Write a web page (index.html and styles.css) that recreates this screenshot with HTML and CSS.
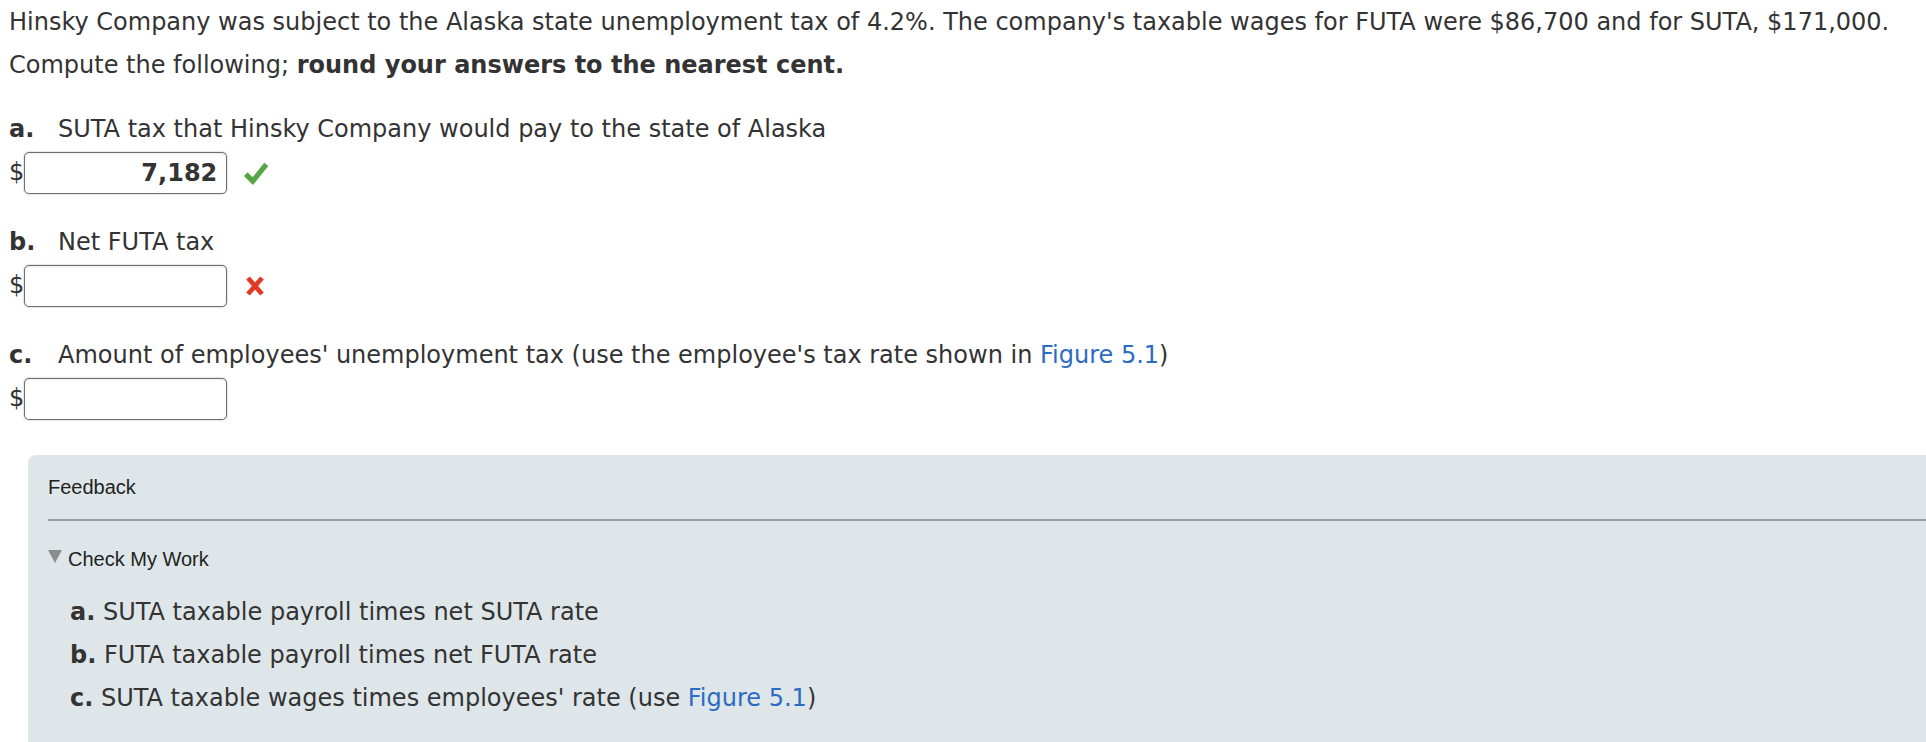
FILE: index.html
```html
<!DOCTYPE html>
<html>
<head>
<meta charset="utf-8">
<link rel="stylesheet" href="styles.css">
</head>
<body>
<div class="problem">
  <p class="intro">Hinsky Company was subject to the Alaska state unemployment tax of 4.2%. The company's taxable wages for FUTA were $86,700 and for SUTA, $171,000.<br>Compute the following; <b>round your answers to the nearest cent.</b></p>
  <div class="parts">
    <div class="part">
      <div class="question"><span class="label">a.</span><span>SUTA tax that Hinsky Company would pay to the state of Alaska</span></div>
      <div class="answer">
        <span class="currency">$</span><span class="field">7,182</span>
        <svg class="mark" width="26" height="26" viewBox="0 0 24 24"><path d="M2.5 13 L9 19.5 L21.5 4" fill="none" stroke="#55a642" stroke-width="4.8" stroke-linecap="butt" stroke-linejoin="miter"/></svg>
      </div>
    </div>
    <div class="part">
      <div class="question"><span class="label">b.</span><span>Net FUTA tax</span></div>
      <div class="answer">
        <span class="currency">$</span><span class="field"></span>
        <svg class="mark" width="24" height="24" viewBox="0 0 24 24"><path d="M5 4 L19 20 M19 4 L5 20" fill="none" stroke="#e33a26" stroke-width="4.8"/></svg>
      </div>
    </div>
    <div class="part">
      <div class="question"><span class="label">c.</span><span>Amount of employees' unemployment tax (use the employee's tax rate shown in <a class="link">Figure 5.1</a>)</span></div>
      <div class="answer">
        <span class="currency">$</span><span class="field"></span>
      </div>
    </div>
  </div>
</div>
<div class="feedback">
  <div class="fb-title">Feedback</div>
  <div class="fb-rule"></div>
  <div class="fb-toggle"><span class="tri"></span>Check My Work</div>
  <div class="fb-items">
    <div><b>a.</b> SUTA taxable payroll times net SUTA rate</div>
    <div><b>b.</b> FUTA taxable payroll times net FUTA rate</div>
    <div><b>c.</b> SUTA taxable wages times employees' rate (use <a class="link">Figure 5.1</a>)</div>
  </div>
</div>
</body>
</html>
```
FILE: styles.css
```css
html, body {
  margin: 0;
  padding: 0;
  background: #ffffff;
}
body {
  font-family: Verdana, "DejaVu Sans", sans-serif;
  font-size: 24px;
  color: #333333;
  overflow: hidden;
}
.problem {
  padding-left: 9px;
}
.intro {
  margin: 0;
  line-height: 43px;
  padding-top: 1px;
}
.parts {
  display: flex;
  flex-direction: column;
  gap: 27px;
  margin-top: 21px;
}
.question {
  display: flex;
  line-height: 43px;
}
.label {
  font-weight: bold;
  width: 49px;
  flex: none;
}
.answer {
  display: flex;
  align-items: center;
  height: 43px;
}
.currency {
  line-height: 43px;
}
.field {
  box-sizing: border-box;
  width: 203px;
  height: 42px;
  border: 1px solid #6f6f6f;
  border-radius: 5px;
  box-shadow: 0 0 2px rgba(0,0,0,0.35), inset 0 1px 2px rgba(0,0,0,0.08);
  text-align: right;
  font-weight: bold;
  padding-right: 9px;
  line-height: 40px;
  background: #fff;
}
.mark {
  margin-left: 16px;
}
.link {
  color: #2b6bc4;
}
.feedback {
  margin-top: 35px;
  margin-left: 28px;
  background: #dfe6e9;
  border-top-left-radius: 8px;
  padding: 13px 0 40px 20px;
  font-family: Arial, "Liberation Sans", sans-serif;
  color: #222222;
}
.fb-title {
  font-size: 20px;
  line-height: 38px;
}
.fb-rule {
  height: 2px;
  background: #9a9fa3;
  margin-top: 13px;
}
.fb-toggle {
  display: flex;
  align-items: center;
  font-size: 20px;
  line-height: 38px;
  margin-top: 19px;
}
.tri {
  width: 0;
  height: 0;
  border-left: 7px solid transparent;
  border-right: 7px solid transparent;
  border-top: 13px solid #8c8c8c;
  margin-right: 6px;
  margin-top: -6px;
}
.fb-items {
  font-family: Verdana, "DejaVu Sans", sans-serif;
  font-size: 24px;
  color: #333333;
  line-height: 43px;
  padding-left: 22px;
  margin-top: 13px;
}
```
